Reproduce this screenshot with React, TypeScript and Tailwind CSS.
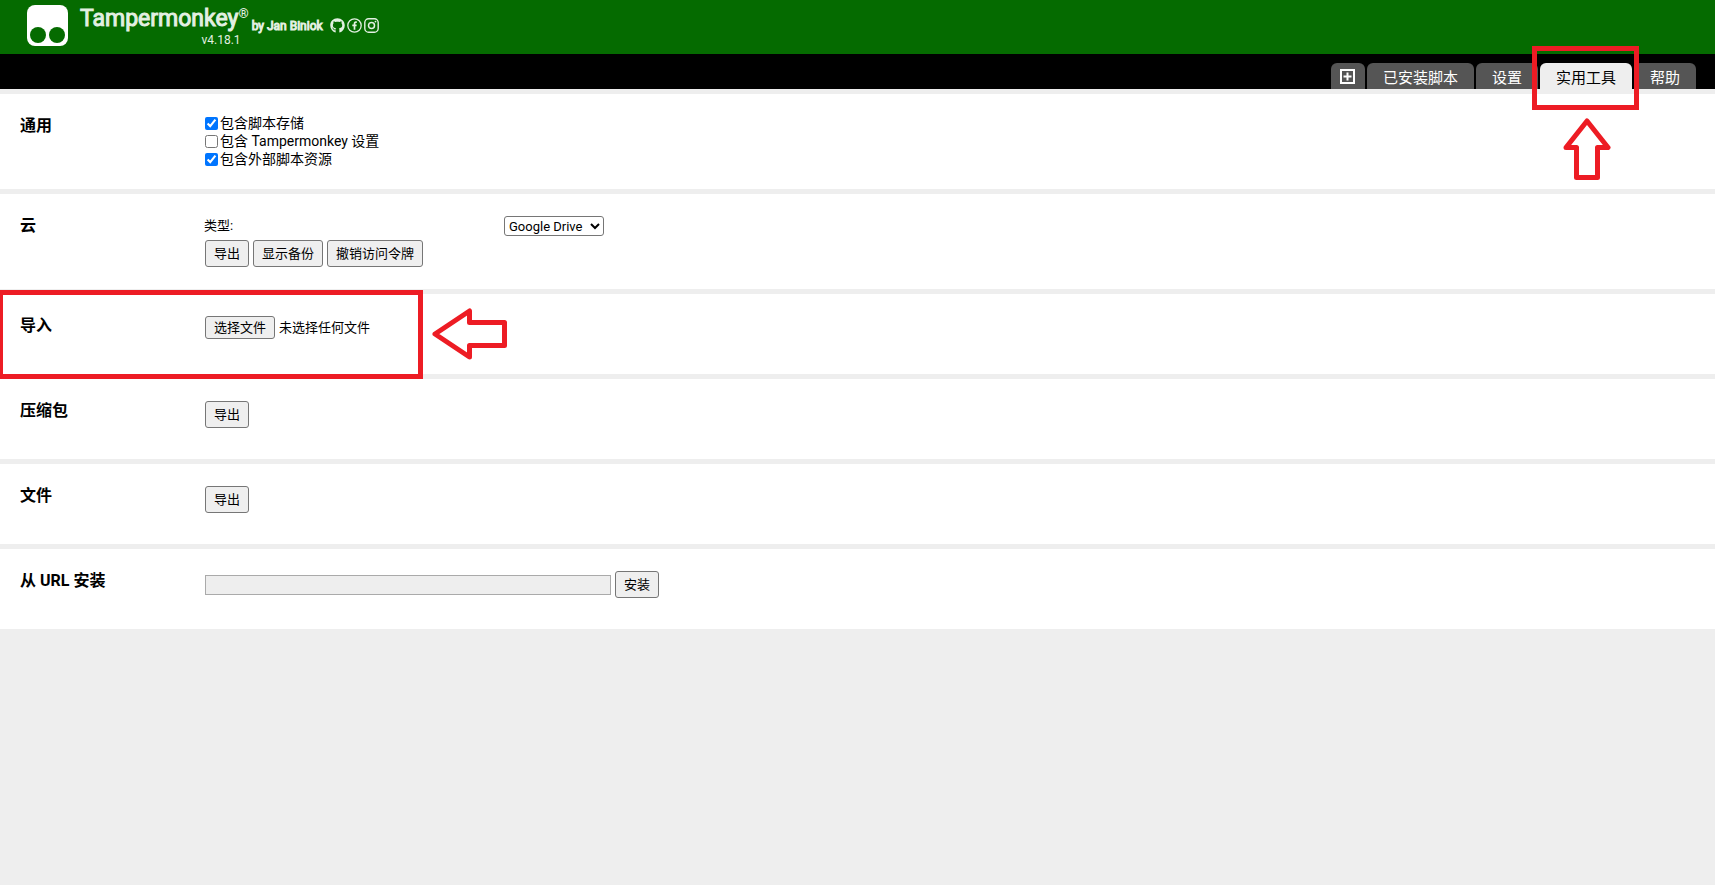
import type { ReactNode } from 'react';
import { FaGithub } from 'react-icons/fa';

const BUTTON =
  'flex h-[27px] items-center rounded-[3px] border border-[#767676] bg-[#efefef] px-2 text-[13px] text-black';

function Logo() {
  return (
    <svg viewBox="0 0 41 41" className="size-[41px] shrink-0" aria-hidden="true">
      <rect width="41" height="41" rx="8" fill="#fff" />
      <circle cx="11" cy="30" r="8" fill="#056b00" />
      <circle cx="30" cy="30" r="8" fill="#056b00" />
    </svg>
  );
}

function FacebookIcon() {
  return (
    <svg viewBox="0 0 15 15" className="size-[15px]" fill="none" stroke="#e3f0e2">
      <circle cx="7.500" cy="7.500" r="6.700" strokeWidth="1.300" />
      <path d="M9.800 4.200H8.900C7.900 4.200 7.500 4.800 7.500 5.700V11.700M5.300 7.300H9.600" strokeWidth="1.700" />
    </svg>
  );
}

function InstagramIcon() {
  return (
    <svg viewBox="0 0 15 15" className="size-[15px]" fill="none" stroke="#e3f0e2" strokeWidth="1.400">
      <rect x="0.800" y="0.800" width="13.400" height="13.400" rx="3.800" />
      <circle cx="7.500" cy="7.500" r="3" strokeWidth="1.500" />
      <circle cx="11.500" cy="3.600" r="0.900" fill="#e3f0e2" stroke="none" />
    </svg>
  );
}

function PlusIcon() {
  return (
    <svg viewBox="0 0 15 15" className="size-[15px]" fill="none" stroke="#fff">
      <rect x="1" y="1" width="13" height="13" strokeWidth="2" />
      <path d="M7.500 3.500V11.500M3.500 7.500H11.500" strokeWidth="2" />
    </svg>
  );
}

function Tab({ children, active = false }: { children: ReactNode; active?: boolean }) {
  return (
    <button
      type="button"
      role="tab"
      aria-selected={active}
      className={
        active
          ? 'flex h-[26px] items-center rounded-t-md bg-[#eee] px-4 pt-[3px] text-[15px] text-black'
          : 'flex h-[26px] items-center rounded-t-md bg-[#555] px-4 pt-[3px] text-[15px] text-white'
      }
    >
      {children}
    </button>
  );
}

function Section({ title, tall = false, children }: { title: string; tall?: boolean; children: ReactNode }) {
  return (
    <section
      className={
        tall
          ? 'flex min-h-[95px] items-start bg-white pl-5 pt-[22px]'
          : 'relative flex min-h-[80px] items-start bg-white pl-5 pt-[22px]'
      }
    >
      <h2 className="w-[184px] shrink-0 text-base leading-5 font-bold">{title}</h2>
      <div className="min-w-0 flex-1">{children}</div>
    </section>
  );
}

function Check({ label, checked = false }: { label: string; checked?: boolean }) {
  return (
    <label className="flex h-[18px] w-fit items-center gap-[2px] pl-px text-sm leading-[18px]">
      <input type="checkbox" defaultChecked={checked} className="size-[13px]" />
      {label}
    </label>
  );
}

export default function App() {
  return (
    <div className="min-h-screen bg-[#eee] font-[Roboto,'Noto_Sans_CJK_SC',sans-serif] text-[13px] leading-[18px] text-black">
      <header className="flex h-[54px] items-start bg-[#056b00] pt-[5px] pl-[27px] text-[#e3f0e2]">
        <Logo />
        <div className="ml-3 flex flex-col">
          <h1 className="flex h-[28px] items-start text-[23px] leading-[28px] font-normal [-webkit-text-stroke:1px_#e3f0e2]">
            Tampermonkey<span className="text-[13px] leading-[18px] font-bold [-webkit-text-stroke:0px]">®</span>
          </h1>
          <span className="self-end pr-2 text-xs leading-[14px]">v4.18.1</span>
        </div>
        <span className="ml-[3px] pt-3 text-xs leading-[18px] font-normal [-webkit-text-stroke:1px_#e3f0e2]">by Jan Biniok</span>
        <nav className="ml-[7px] flex gap-[2px] pt-[13px]">
          <a href="#github" aria-label="GitHub"><FaGithub className="size-[15px]" /></a>
          <a href="#facebook" aria-label="Facebook"><FacebookIcon /></a>
          <a href="#instagram" aria-label="Instagram"><InstagramIcon /></a>
        </nav>
      </header>

      <div role="tablist" className="flex h-[35px] items-end justify-end gap-[2px] bg-black pr-[19px]">
        <button type="button" role="tab" aria-label="+" aria-selected={false} className="flex h-[26px] w-[34px] items-center justify-center rounded-t-md bg-[#555]">
          <PlusIcon />
        </button>
        <Tab>已安装脚本</Tab>
        <Tab>设置</Tab>
        <div className="relative">
          <Tab active>实用工具</Tab>
          <div className="pointer-events-none absolute -top-[17px] -left-2 h-[64px] w-[107px] border-[5px] border-[#ed1c24]" />
          <svg viewBox="0 0 48 62" className="pointer-events-none absolute top-[55px] left-[23px] h-[62px] w-[48px]" fill="none" stroke="#ed1c24" strokeWidth="5" strokeLinejoin="round">
            <path d="M24 3L45 29.500H34.500V59.500H13.500V29.500H3Z" />
          </svg>
        </div>
        <Tab>帮助</Tab>
      </div>

      <main className="flex flex-col gap-[5px] pt-[5px]">
        <Section title="通用" tall>
          <div className="-mt-[2px]">
            <Check label="包含脚本存储" checked />
            <Check label="包含 Tampermonkey 设置" />
            <Check label="包含外部脚本资源" checked />
          </div>
        </Section>

        <Section title="云" tall>
          <div className="flex h-[20px] items-center">
            <label htmlFor="cloud-type" className="w-[300px]">类型:</label>
            <select id="cloud-type" className="h-[20px] w-[100px] rounded-[3px] border border-[#767676] bg-white text-[13px]">
              <option>Google Drive</option>
            </select>
          </div>
          <div className="mt-1 flex gap-1 pl-px">
            <button type="button" className={BUTTON}>导出</button>
            <button type="button" className={BUTTON}>显示备份</button>
            <button type="button" className={BUTTON}>撤销访问令牌</button>
          </div>
        </Section>

        <Section title="导入">
          <label className="flex w-fit items-center gap-1 pl-px">
            <input type="file" className="sr-only" />
            <span className="flex h-[23px] items-center rounded-[3px] border border-[#767676] bg-[#efefef] px-2">选择文件</span>
            <span>未选择任何文件</span>
          </label>
          <div className="pointer-events-none absolute -top-1 -left-[2px] h-[89px] w-[425px] border-[5px] border-[#ed1c24]" />
          <svg viewBox="0 0 75 52" className="pointer-events-none absolute top-[14px] left-[432px] h-[52px] w-[75px]" fill="none" stroke="#ed1c24" strokeWidth="5" strokeLinejoin="round">
            <path d="M3 26L37.500 3V14.500H72.500V37.500H37.500V49Z" />
          </svg>
        </Section>

        <Section title="压缩包">
          <div className="flex pl-px">
            <button type="button" className={BUTTON}>导出</button>
          </div>
        </Section>

        <Section title="文件">
          <div className="flex pl-px">
            <button type="button" className={BUTTON}>导出</button>
          </div>
        </Section>

        <Section title="从 URL 安装">
          <div className="flex items-center gap-1 pl-px">
            <input type="text" aria-label="从 URL 安装" className="h-[20px] w-[406px] border border-[#aaa] bg-[#eee] px-1" />
            <button type="button" className={BUTTON}>安装</button>
          </div>
        </Section>
      </main>
    </div>
  );
}
